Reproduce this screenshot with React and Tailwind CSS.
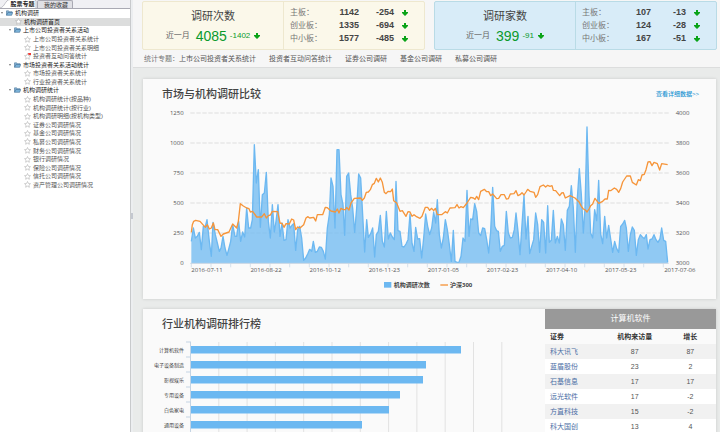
import React from "react";

const FONT = "font-['Liberation_Sans','Noto_Sans_CJK_SC',sans-serif]";

const tree = [
  { level: 0, text: "机构调研" },
  { level: 1, text: "机构调研首页", active: true },
  { level: 1, text: "上市公司投资者关系活动", folder: true },
  { level: 2, text: "上市公司投资者关系统计" },
  { level: 2, text: "上市公司投资者关系明细" },
  { level: 2, text: "投资者互动问答统计", fresh: true },
  { level: 1, text: "市场投资者关系活动统计", folder: true },
  { level: 2, text: "市场投资者关系统计" },
  { level: 2, text: "行业投资者关系统计" },
  { level: 1, text: "机构调研统计", folder: true },
  { level: 2, text: "机构调研统计(按品种)" },
  { level: 2, text: "机构调研统计(按行业)" },
  { level: 2, text: "机构调研明细(按机构类型)" },
  { level: 2, text: "证券公司调研情况" },
  { level: 2, text: "基金公司调研情况" },
  { level: 2, text: "私募公司调研情况" },
  { level: 2, text: "财务公司调研情况" },
  { level: 2, text: "银行调研情况" },
  { level: 2, text: "保险公司调研情况" },
  { level: 2, text: "信托公司调研情况" },
  { level: 2, text: "资产管理公司调研情况" },
];

const topics = ["上市公司投资者关系统计", "投资者互动问答统计", "证券公司调研", "基金公司调研", "私募公司调研"];

// Plot units: three to a pixel, vertical axis runs from 115 (1250) to 565 (0).
const areaPoints =
  "154,500 160,460 166,490 172,485 178,473 184,525 190,455 196,455 201,435 208,500 214,545 219,443 226,480 232,505 238,530 243,520 249,485 255,520 261,542 267,520 272,500 278,450 285,485 290,485 296,440 302,500 308,472 314,487 320,400 326,460 332,460 337,435 343,210 349,325 355,285 361,458 367,360 373,355 379,293 385,440 391,490 397,390 403,472 408,440 414,390 420,485 426,445 432,497 438,495 444,435 450,460 456,452 461,447 467,527 473,465 479,455 485,490 491,557 497,550 503,538 509,524 515,530 520,500 526,533 532,530 538,517 544,518 550,530 556,553 562,460 568,420 573,310 579,335 585,460 591,225 597,225 603,360 609,390 614,482 620,305 626,295 632,360 638,400 644,473 650,400 656,298 662,310 668,420 674,532 680,435 685,488 692,477 698,460 704,547 709,480 715,470 721,422 727,500 733,517 739,410 745,493 751,475 757,487 763,495 768,320 774,468 780,470 786,515 792,517 798,508 804,495 810,418 816,505 822,530 827,458 833,493 839,492 845,550 851,490 857,418 863,455 869,480 875,460 881,412 887,445 892,375 898,480 904,520 910,490 916,435 922,465 928,510 934,560 940,467 945,560 951,563 957,563 963,545 969,490 975,500 981,347 987,485 992,433 998,435 1004,387 1010,410 1016,475 1022,483 1028,460 1034,462 1040,495 1046,535 1052,470 1058,338 1064,455 1070,468 1075,470 1081,530 1087,515 1093,512 1099,410 1105,475 1111,490 1117,488 1123,465 1128,415 1134,470 1140,540 1146,450 1152,362 1158,493 1164,425 1169,537 1175,515 1181,495 1187,415 1193,450 1199,533 1205,435 1211,443 1217,535 1223,393 1228,503 1234,497 1240,407 1246,505 1252,485 1258,505 1264,433 1270,450 1276,527 1282,407 1288,395 1294,333 1300,400 1306,533 1312,370 1318,282 1324,360 1330,475 1335,400 1341,157 1347,360 1352,475 1358,490 1364,405 1370,438 1376,317 1382,478 1388,507 1394,425 1400,490 1406,452 1412,493 1418,533 1424,500 1430,522 1436,533 1442,455 1448,448 1454,437 1459,460 1465,530 1471,480 1477,457 1483,467 1489,542 1495,495 1501,480 1507,487 1513,492 1519,480 1524,523 1530,495 1536,493 1542,480 1548,495 1554,503 1560,492 1565,460 1571,497 1577,500 1583,563";

const linePoints =
  "154,473 157,450 161,440 167,437 180,440 196,458 202,450 208,463 214,460 220,445 225,465 233,465 243,485 250,478 267,472 278,448 290,460 295,440 301,387 310,394 320,400 327,402 331,412 338,410 350,427 365,427 373,417 379,430 385,423 391,421 397,410 413,411 420,445 427,447 432,458 438,447 448,448 455,433 461,436 467,465 473,457 480,460 491,450 498,430 503,426 509,430 521,428 527,439 532,420 548,420 556,398 562,399 573,409 586,412 592,403 597,415 603,401 610,405 616,405 620,398 627,406 633,385 643,371 662,370 667,377 673,370 679,353 685,352 691,345 697,330 703,326 709,311 715,322 721,310 727,323 733,353 738,357 744,350 752,351 757,343 761,378 770,385 780,410 787,408 798,425 804,411 810,412 816,425 822,420 828,425 840,431 846,425 856,398 863,398 869,407 875,401 881,408 886,401 892,420 905,420 916,411 922,415 930,400 945,399 951,390 957,400 963,396 970,399 981,385 992,368 1000,370 1005,374 1010,365 1016,375 1022,350 1033,344 1040,351 1046,351 1052,363 1058,358 1070,372 1076,371 1083,360 1093,360 1099,373 1105,372 1111,358 1122,357 1128,348 1134,363 1140,360 1146,354 1152,361 1158,352 1163,344 1170,350 1182,353 1187,368 1193,360 1200,336 1210,331 1217,337 1223,332 1230,335 1236,333 1240,347 1247,348 1259,363 1265,355 1270,354 1276,370 1290,363 1305,370 1318,383 1324,395 1330,403 1336,406 1341,412 1347,403 1352,393 1358,388 1365,371 1370,378 1376,386 1388,380 1395,373 1402,373 1406,347 1412,348 1423,340 1430,344 1436,353 1442,342 1448,322 1460,304 1471,304 1477,323 1489,331 1495,315 1501,318 1506,301 1513,299 1518,285 1524,262 1530,261 1536,273 1542,263 1552,267 1559,286 1565,267 1583,270";

const leftAxis = ["1250", "1000", "750", "500", "250", "0"];
const rightAxis = ["4000", "3800", "3600", "3400", "3200", "3000"];
const dates = ["2016-07-11", "2016-08-22", "2016-10-12", "2016-11-23", "2017-01-05", "2017-02-23", "2017-04-10", "2017-05-23", "2017-07-06"];

const industries = [
  ["计算机软件", 270],
  ["电子设备制造", 235],
  ["影视娱乐", 232],
  ["专用设备", 209],
  ["白色家电", 198],
  ["通用设备", 171],
];

const stocks = [
  ["科大讯飞", 87, 87],
  ["蓝盾股份", 23, 2],
  ["石基信息", 17, 17],
  ["远光软件", 17, -2],
  ["方直科技", 15, -2],
  ["科大国创", 13, 4],
];

function Folder() {
  return (
    <svg viewBox="0 0 16 14" className="h-[6px] w-[7px] shrink-0" aria-hidden="true">
      <path d="M1 12V2h5l1 2h7v3" fill="#8fb8d8" stroke="#3f6f96" strokeWidth="1.3" />
      <path d="M1 12.5 4 6h11.5L13 12.5z" fill="#7db4da" stroke="#2f6089" strokeWidth="1.2" />
    </svg>
  );
}

function Star({ fresh }) {
  return (
    <svg viewBox="0 0 14 14" className="h-[7px] w-[7px] shrink-0" aria-hidden="true">
      <path d="m7 1 1.8 3.9 4.2.5-3.1 2.9.8 4.2L7 10.4l-3.7 2.1.8-4.2L1 5.4l4.2-.5z" fill="#fff" stroke="#b0b0b0" strokeWidth="1.2" />
      {fresh && <path d="M8 0h6v4H9z" fill="#ef3b36" />}
    </svg>
  );
}

function Down() {
  return (
    <svg viewBox="0 0 12 12" className="size-[6px] shrink-0" role="img" aria-label="下降">
      <path d="M4 0h4v4h4v2L6 12 0 6V4h4z" fill="#0aa318" />
    </svg>
  );
}

function Sidebar() {
  return (
    <aside className="w-[130px] shrink-0 overflow-hidden bg-white text-[6px] text-[#555]">
      <div className="flex h-[9px] items-end border-b border-[#a9a9b3] bg-[#f0f0f4]" role="tablist">
        <button role="tab" aria-selected="true" className="relative h-[9px] w-[37px] pl-[8px] font-bold leading-[11px] text-[#222]">
          <svg viewBox="0 0 37 9" className="absolute inset-0 h-full w-full" aria-hidden="true">
            <path d="M0 9C5 8 5 1 10 .5h24q2 0 2 2V9" fill="#fff" stroke="#a9a9b3" strokeWidth=".7" />
          </svg>
          <span className="relative">股票专题</span>
        </button>
        <button role="tab" aria-selected="false" className="h-[8px] w-[36px] rounded-t-[2px] border border-b-0 border-[#a9a9b3] bg-[#e0e0e5] pl-[2px] leading-[9px] text-[#333]">
          我的收藏
        </button>
      </div>
      <ul className="flex h-[180px] flex-col">
        {tree.map((item) => (
          <li key={item.text} className={"flex flex-1 items-center " + (item.active ? "bg-[#dcdddd]" : "")}>
            <a
              href="#"
              className={
                "flex items-center whitespace-nowrap leading-[8px] " +
                (item.level === 0 ? "pl-[1px] text-[#222]" : item.folder ? "pl-[9px] text-[#222]" : item.active ? "pl-[15px] text-[#222]" : "pl-[24px]")
              }
            >
              {item.level === 0 || item.folder ? (
                <>
                  <span className="mr-[3px] border-x-[1px] border-t-[2px] border-x-transparent border-t-[#777]" />
                  <Folder />
                </>
              ) : (
                <Star fresh={item.fresh} />
              )}
              <span className="ml-[2px]">{item.text}</span>
            </a>
          </li>
        ))}
      </ul>
    </aside>
  );
}

function Stat({ title, total, delta, rows, tone }) {
  return (
    <section className={"flex h-[49px] flex-1 rounded-[2px] border " + tone}>
      <div className="flex flex-1 flex-col items-center border-r border-inherit pt-[6px]">
        <h2 className="text-[11px] leading-[17px] text-[#444]">{title}</h2>
        <p className="flex items-center text-[8px] leading-[22px] text-[#0a9a2c]">
          <span className="mr-[6px] text-[#666]">近一月</span>
          <span className="mr-[3px] text-[14px]">{total}</span>
          <span className="mr-[4px]">{delta}</span>
          <Down />
        </p>
      </div>
      <dl className="flex flex-1 flex-col justify-center text-[8px]">
        {rows.map(([name, value, change]) => (
          <div key={name} className="flex h-[13px] items-center pl-[6px]">
            <dt className="flex-1 text-[#777]">{name}：</dt>
            <dd className="w-[30px] text-right text-[9px] font-bold text-[#444]">{value}</dd>
            <dd className="mr-[16px] flex w-[49px] items-center justify-end gap-[8px] text-[9px] font-bold text-[#444]">
              {change}
              <Down />
            </dd>
          </div>
        ))}
      </dl>
    </section>
  );
}

function TrendChart() {
  return (
    <svg viewBox="9 100 1719 570" className="block w-full font-['Open_Sans','Noto_Sans_CJK_SC',sans-serif]" role="img" aria-label="市场与机构调研比较">
      {leftAxis.map((label, i) => (
        <g key={label} fontSize="18" fill="#555">
          {i < 5 && <path d={`M151 ${115 + i * 90}H1586`} stroke="#dedede" strokeWidth="3" strokeDasharray="13 5" />}
          <text x="131" y={121 + i * 90} textAnchor="end">{label}</text>
          <text x="1607" y={121 + i * 90}>{rightAxis[i]}</text>
        </g>
      ))}
      <polygon points={`154,565 ${areaPoints} 1583,565`} fill="#7cc0f1" fillOpacity=".85" />
      <polyline points={areaPoints} fill="none" stroke="#6cb8f1" strokeWidth="4" strokeLinejoin="round" />
      <polyline points={linePoints} fill="none" stroke="#f6953a" strokeWidth="4" strokeLinejoin="round" />
      <path d="M151 566H1586" stroke="#c4d4e4" strokeWidth="3" />
      {Array.from({ length: 25 }, (_, i) => (
        <path key={i} d={`M${154 + i * 59} 566v12`} stroke="#c4d4e4" strokeWidth="2" />
      ))}
      {dates.map((date, i) => (
        <text key={date} x={154 + i * 177.3} y="592" fontSize="18" fill="#555">{date}</text>
      ))}
      <path d="M732 622h22v17h-22z" fill="#6cb8f1" />
      <path d="M901 631h23" stroke="#f6953a" strokeWidth="4" />
      <g fontSize="18" fontWeight="bold" fill="#444">
        <text x="761" y="638">机构调研次数</text>
        <text x="930" y="638">沪深300</text>
      </g>
    </svg>
  );
}

function RankChart() {
  return (
    <svg viewBox="0 0 402 120" className="block w-full font-['Noto_Sans_CJK_SC',sans-serif]" role="img" aria-label="行业机构调研排行榜">
      {Array.from({ length: 12 }, (_, i) => (
        <path key={i} d={`M${47.5 + i * 28.3} 8V120`} stroke={i ? "#e2e2e2" : "#c4d4e4"} />
      ))}
      {industries.map(([name, width], i) => (
        <g key={name}>
          <path d={`M43 ${8 + i * 15}h5`} stroke="#c4d4e4" />
          <text x="41" y={18 + i * 15} textAnchor="end" fontSize="5" fill="#444">{name}</text>
          <rect x="48" y={12 + i * 15} width={width} height="7.5" fill="#6cb8f1" />
        </g>
      ))}
    </svg>
  );
}

function StockTable() {
  return (
    <table className="w-full table-fixed border-collapse text-[7px] leading-[15px] text-[#555]">
      <caption className="h-[20px] bg-[#999] text-[8px] leading-[20px] text-white">计算机软件</caption>
      <thead>
        <tr className="text-[#333]">
          <th className="w-[35%] pl-[5px] text-left">证券</th>
          <th className="w-[35%]">机构来访量</th>
          <th className="w-[30%]">增长</th>
        </tr>
      </thead>
      <tbody>
        {stocks.map(([name, visits, growth]) => (
          <tr key={name} className="bg-white odd:bg-[#f1f1f1]">
            <td className="pl-[5px]"><a href="#" className="text-[#4a6ea5]">{name}</a></td>
            <td className="text-center">{visits}</td>
            <td className="text-center">{growth}</td>
          </tr>
        ))}
      </tbody>
    </table>
  );
}

export default function App() {
  return (
    <div className={"flex h-screen overflow-hidden bg-[#e9ebea] " + FONT}>
      <Sidebar />
      <div className="flex w-[3px] shrink-0 items-center border-l border-[#c8cacc] bg-[#eceef0]">
        <span className="h-[6px] w-[2px] bg-[#c4c8d0]" />
      </div>
      <main className="min-w-0 flex-1">
        <header className="h-[68px] border-b border-[#dcdddd] bg-[#f6f6f6] pt-[1px] pr-[3px] pl-[9px]">
          <div className="flex gap-[9px]">
            <Stat
              title="调研次数"
              total="4085"
              delta="-1402"
              tone="border-[#eee8cf] bg-[#fbf8ea]"
              rows={[["主板", 1142, -254], ["创业板", 1335, -694], ["中小板", 1577, -485]]}
            />
            <Stat
              title="调研家数"
              total="399"
              delta="-91"
              tone="border-[#b9dbe6] bg-[#d8ecf8]"
              rows={[["主板", 107, -13], ["创业板", 124, -28], ["中小板", 167, -51]]}
            />
          </div>
          <nav className="flex items-center gap-[13px] whitespace-nowrap pl-[2px] text-[7px] leading-[18px] text-[#555]">
            <span className="-mr-[13px] text-[#777]">统计专题：</span>
            {topics.map((topic) => (
              <a key={topic} href="#">{topic}</a>
            ))}
          </nav>
        </header>
        <div className="flex flex-col gap-[10px] pt-[11px] pr-[4px] pl-[10px]">
          <section className="bg-[#fafafa] pb-[1px] shadow-[0_0_3px_rgba(0,0,0,0.15)]">
            <div className="flex h-[29px] items-center justify-between pt-[2px] pr-[17px] pl-[19px]">
              <h2 className="text-[11px] font-medium text-[#444]">市场与机构调研比较</h2>
              <a href="#" className="text-[6px] font-medium text-[#1c94d2]">查看详细数据&gt;&gt;</a>
            </div>
            <TrendChart />
          </section>
          <section className="flex bg-[#fafafa] shadow-[0_0_3px_rgba(0,0,0,0.15)]">
            <div className="min-w-0 flex-[402]">
              <h2 className="h-[25px] pt-[7px] pl-[19px] text-[11px] font-medium leading-[17px] text-[#444]">行业机构调研排行榜</h2>
              <RankChart />
            </div>
            <div className="min-w-0 flex-[171]">
              <StockTable />
            </div>
          </section>
        </div>
      </main>
    </div>
  );
}
